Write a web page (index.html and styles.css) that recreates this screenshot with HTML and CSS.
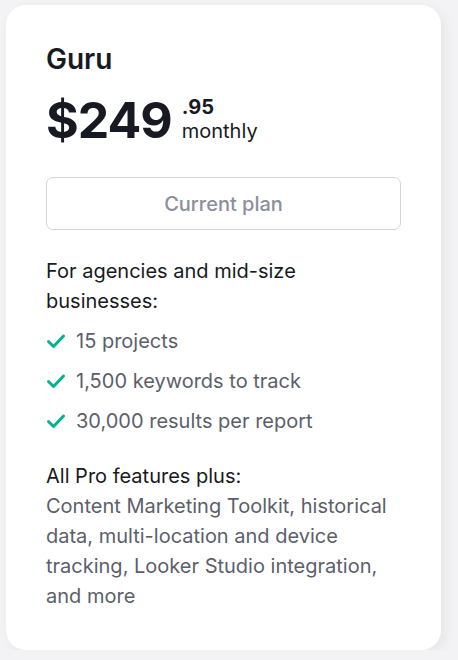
FILE: index.html
```html
<!DOCTYPE html>
<html>
<head>
<meta charset="utf-8">
<link rel="stylesheet" href="styles.css">
</head>
<body>
<div class="card">
  <h2 class="title">Guru</h2>
  <div class="price">
    <span class="amount">$249</span>
    <span class="side">
      <span class="cents">.95</span>
      <span class="period">monthly</span>
    </span>
  </div>
  <button class="plan-btn">Current plan</button>
  <p class="lead">For agencies and mid-size businesses:</p>
  <ul class="features">
    <li><svg class="check" viewBox="0 0 20 20" width="20" height="20"><path d="M2.5 10.5 L7.5 15.5 L17.5 5" fill="none" stroke="#00b48f" stroke-width="3" stroke-linecap="round" stroke-linejoin="round"/></svg>15 projects</li>
    <li><svg class="check" viewBox="0 0 20 20" width="20" height="20"><path d="M2.5 10.5 L7.5 15.5 L17.5 5" fill="none" stroke="#00b48f" stroke-width="3" stroke-linecap="round" stroke-linejoin="round"/></svg>1,500 keywords to track</li>
    <li><svg class="check" viewBox="0 0 20 20" width="20" height="20"><path d="M2.5 10.5 L7.5 15.5 L17.5 5" fill="none" stroke="#00b48f" stroke-width="3" stroke-linecap="round" stroke-linejoin="round"/></svg>30,000 results per report</li>
  </ul>
  <p class="plus-title">All Pro features plus:</p>
  <p class="plus-text">Content Marketing Toolkit, historical data, multi-location and device tracking, Looker Studio integration, and more</p>
</div>
</body>
</html>
```

FILE: styles.css
```css
html, body {
  margin: 0;
  padding: 0;
  background: #f3f3f5;
}
body {
  padding: 5px 0 0 6px;
  font-family: Inter, "Noto Sans", sans-serif;
  color: #171a22;
}
.card {
  width: 435px;
  height: 645px;
  box-sizing: border-box;
  background: #ffffff;
  border-radius: 20px;
  box-shadow: 4px 4px 14px rgba(20, 25, 40, 0.06);
  padding: 38px 40px 0 40px;
}
.title {
  margin: 0;
  font-size: 28px;
  font-weight: 600;
  line-height: 32px;
  color: #171a22;
}
.price {
  display: flex;
  align-items: flex-start;
  margin-top: 14px;
  height: 62px;
}
.amount {
  font-size: 50px;
  font-weight: 700;
  line-height: 63px;
  letter-spacing: -1px;
}
.side {
  display: flex;
  flex-direction: column;
  margin-left: 10px;
  margin-top: 7px;
}
.cents {
  font-size: 20px;
  font-weight: 700;
  line-height: 22px;
}
.period {
  font-size: 20px;
  font-weight: 400;
  line-height: 26px;
  color: #171a22;
}
.plan-btn {
  display: block;
  margin-top: 26px;
  width: 355px;
  height: 53px;
  background: #fff;
  border: 1px solid #d2d4db;
  border-radius: 7px;
  font-family: inherit;
  font-size: 20px;
  font-weight: 500;
  color: #8b8f9c;
}
.lead {
  margin: 26px 0 0;
  font-size: 20px;
  line-height: 30px;
  color: #171a22;
}
.features {
  list-style: none;
  margin: 5px 0 0;
  padding: 0;
}
.features li {
  display: flex;
  align-items: center;
  height: 40px;
  font-size: 20px;
  color: #5b5f6c;
}
.check {
  margin-right: 10px;
  flex-shrink: 0;
}
.plus-title {
  margin: 20px 0 0;
  font-size: 20px;
  line-height: 30px;
  color: #171a22;
}
.plus-text {
  margin: 0;
  font-size: 20px;
  line-height: 30px;
  color: #5b5f6c;
}
```
